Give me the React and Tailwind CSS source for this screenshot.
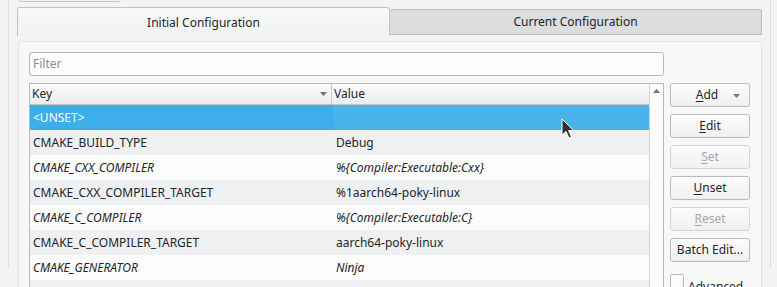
import React from "react";

const rows = [
    { key: "<UNSET>", value: "", selected: true },
    { key: "CMAKE_BUILD_TYPE", value: "Debug" },
    { key: "CMAKE_CXX_COMPILER", value: "%{Compiler:Executable:Cxx}", italic: true },
    { key: "CMAKE_CXX_COMPILER_TARGET", value: "%1aarch64-poky-linux" },
    { key: "CMAKE_C_COMPILER", value: "%{Compiler:Executable:C}", italic: true },
    { key: "CMAKE_C_COMPILER_TARGET", value: "aarch64-poky-linux" },
    { key: "CMAKE_GENERATOR", value: "Ninja", italic: true },
    { key: "CMAKE_PREFIX_PATH", value: "/opt/poky/sysroots/cortexa53-poky-linux/usr/lib/cmake" },
];

const Mnemonic = ({ first, rest }) => (
    <>
        <span className="underline underline-offset-2 decoration-1">{first}</span>
        {rest}
    </>
);

const SideButton = ({ children, disabled, dropdown }) => (
    <div
        className={`relative h-[24px] w-[80px] rounded-[3px] border flex items-center justify-center bg-gradient-to-b from-[#fcfcfc] to-[#f0f0f0] ${
            disabled ? "border-[#d4d5d6] text-[#a5a7a9]" : "border-[#b9babb] text-[#232629]"
        }`}
    >
        <span className={dropdown ? "-ml-[6px]" : ""}>{children}</span>
        {dropdown && (
            <svg className="absolute right-[9px] top-[10px]" width="7" height="4" viewBox="0 0 7 4">
                <path d="M0 0 L7 0 L3.5 4 Z" fill="#7b7c7e" />
            </svg>
        )}
    </div>
);

const Cursor = () => (
    <svg className="absolute left-[561px] top-[118px]" width="14" height="22" viewBox="0 0 14 22">
        <path d="M1 1 L1 17 L5 13.5 L8 20 L10.5 19 L7.6 12.6 L12.6 12.4 Z" fill="#2f3133" stroke="#ffffff" strokeWidth="1" strokeLinejoin="round" />
    </svg>
);

export default function App() {
    return (
        <div className="relative w-[777px] h-[287px] overflow-hidden bg-[#f3f3f4] text-[12px] text-[#232629] font-['Noto_Sans',sans-serif]">
            <div className="ml-[8px] w-[763px] h-full border-l border-r border-[#dcdcdd] pl-[8px]">
                {/* cut-off button above the tabs */}
                <div className="-mt-[20px] ml-[1px] w-[103px] h-[22px] rounded-[3px] border border-[#c4c5c6] bg-[#f6f6f6]" />

                <div className="mt-[5px] flex items-start w-[745px]">
                    <div className="w-[373px] h-[29px] rounded-t-[3px] border border-b-0 border-[#c1c2c3] bg-gradient-to-b from-[#fafafa] to-[#f0f1f2] flex items-center justify-center pt-[1px]">
                        Initial Configuration
                    </div>
                    <div className="mt-[2px] w-[372px] h-[26px] rounded-t-[3px] border border-l-0 border-[#b8b9ba] bg-[#dcdddf] flex items-center justify-center">
                        Current Configuration
                    </div>
                </div>

                <div className="mt-[5px] ml-[1px] w-[744px] h-[300px] rounded-[3px] border border-[#e1e2e3] bg-[#f8f8f8] pl-[10px] pt-[10px]">
                    <div className="w-[635px] h-[24px] rounded-[3px] border border-[#b7b8b9] bg-[#fcfcfc] flex items-center pl-[3px] text-[#8e9092]">
                        Filter
                    </div>

                    <div className="mt-[7px] flex gap-[6px] items-start">
                        <div className="w-[635px] h-[230px] border border-[#b9babb] bg-[#fcfcfc] flex">
                            <div className="flex-1 flex flex-col">
                                <div className="h-[21px] shrink-0 border-b border-[#c3c4c5] bg-gradient-to-b from-[#fcfcfc] to-[#ebeced] grid grid-cols-[302px_1fr] items-center">
                                    <div className="relative h-full flex items-center pl-[2px] border-r border-[#c9cacb]">
                                        Key
                                        <svg className="absolute left-[290px] top-[8px]" width="7" height="4" viewBox="0 0 7 4">
                                            <path d="M0 0 L7 0 L3.5 4 Z" fill="#6e7072" />
                                        </svg>
                                    </div>
                                    <div className="pl-[2px]">Value</div>
                                </div>
                                {rows.map((row, i) => (
                                    <div
                                        key={row.key}
                                        className={`h-[25px] shrink-0 grid grid-cols-[303px_1fr] items-center ${
                                            row.selected ? "text-white" : i % 2 === 1 ? "bg-[#eff0f1]" : "bg-[#fcfcfc]"
                                        }`}
                                    >
                                        <div className={`h-full flex items-center pl-[3px] whitespace-nowrap ${row.selected ? "bg-[#3daee9]" : ""} ${row.italic ? "italic" : ""}`}>
                                            {row.key}
                                        </div>
                                        <div className={`h-full flex items-center pl-[3px] whitespace-nowrap overflow-hidden ${row.selected ? "bg-gradient-to-b from-[#4fb4ea] to-[#44b1e9]" : ""} ${row.italic ? "italic" : ""}`}>
                                            {row.value}
                                        </div>
                                    </div>
                                ))}
                            </div>
                            <div className="w-[14px] border-l border-[#d3d4d5] bg-[#fcfcfc] flex justify-center pt-[5px]">
                                <svg width="7" height="4" viewBox="0 0 7 4">
                                    <path d="M0 4 L7 4 L3.5 0 Z" fill="#6e7072" />
                                </svg>
                            </div>
                        </div>

                        <div className="flex flex-col gap-[7px]">
                            <SideButton dropdown>
                                <Mnemonic first="A" rest="dd" />
                            </SideButton>
                            <SideButton>
                                <Mnemonic first="E" rest="dit" />
                            </SideButton>
                            <SideButton disabled>
                                <Mnemonic first="S" rest="et" />
                            </SideButton>
                            <SideButton>
                                <Mnemonic first="U" rest="nset" />
                            </SideButton>
                            <SideButton disabled>
                                <Mnemonic first="R" rest="eset" />
                            </SideButton>
                            <SideButton>Batch Edit...</SideButton>
                            <div className="mt-[5px] flex items-start gap-[4px]">
                                <div className="w-[14px] h-[14px] rounded-[2px] border border-[#b9babb] bg-[#fcfcfc]" />
                                <span className="leading-[14px] pt-[6px]">Advanced</span>
                            </div>
                        </div>
                    </div>
                </div>
            </div>
            <Cursor />
        </div>
    );
}
